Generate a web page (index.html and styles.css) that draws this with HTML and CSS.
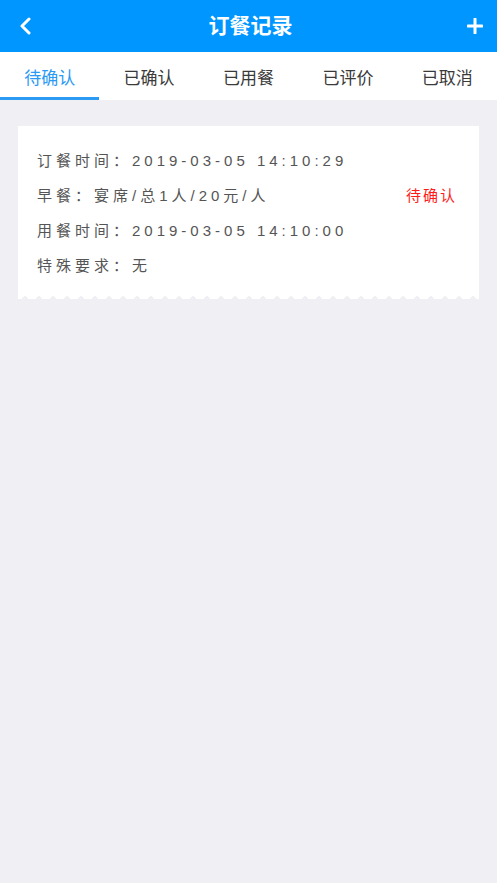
FILE: index.html
```html
<!DOCTYPE html>
<html lang="zh">
<head>
<meta charset="utf-8">
<title>订餐记录</title>
<link rel="stylesheet" href="styles.css">
</head>
<body>
<div class="page">
  <header class="topbar">
    <span class="back">
      <svg width="14" height="18" viewBox="0 0 14 18"><path d="M11 2 L4 9 L11 16" fill="none" stroke="#fff" stroke-width="3" stroke-linecap="round" stroke-linejoin="round"/></svg>
    </span>
    <h1 class="title">订餐记录</h1>
    <span class="add">
      <svg width="16" height="16" viewBox="0 0 16 16"><path d="M8 1 V15 M1 8 H15" stroke="#fff" stroke-width="3" stroke-linecap="round"/></svg>
    </span>
  </header>
  <nav class="tabs">
    <div class="tab active">待确认</div>
    <div class="tab">已确认</div>
    <div class="tab">已用餐</div>
    <div class="tab">已评价</div>
    <div class="tab">已取消</div>
  </nav>
  <main class="content">
    <div class="card">
      <div class="row">订餐时间：2019-03-05 14:10:29</div>
      <div class="row split"><span>早餐：宴席/总1人/20元/人</span><span class="status">待确认</span></div>
      <div class="row">用餐时间：2019-03-05 14:10:00</div>
      <div class="row">特殊要求：无</div>
    </div>
  </main>
</div>
</body>
</html>
```
FILE: styles.css
```css
html, body {
  margin: 0;
  padding: 0;
}
body {
  background: #efeff4;
  font-family: "Liberation Sans", "Noto Sans CJK SC", sans-serif;
  width: 497px;
  min-height: 883px;
}
.topbar {
  height: 52px;
  background: #0096ff;
  display: flex;
  align-items: center;
  justify-content: space-between;
  padding: 0 14px 0 18px;
  box-sizing: border-box;
}
.back, .add {
  display: flex;
  align-items: center;
  width: 20px;
}
.add { justify-content: flex-end; }
.title {
  margin: 0;
  color: #fff;
  font-size: 21px;
  font-weight: bold;
  line-height: 52px;
}
.tabs {
  display: grid;
  grid-template-columns: repeat(5, 1fr);
  background: #fff;
  height: 48px;
}
.tab {
  display: flex;
  align-items: center;
  justify-content: center;
  font-size: 17px;
  color: #3a3a3a;
  border-bottom: 3px solid transparent;
  padding-top: 3px;
  box-sizing: border-box;
}
.tab.active {
  color: #2b9af3;
  border-bottom-color: #2b9af3;
}
.content {
  padding: 26px 18px;
}
.card {
  background: #fff;
  padding: 17px 22px 16px 19px;
  position: relative;
}
.card::after {
  content: "";
  position: absolute;
  left: 0;
  right: 0;
  bottom: 0;
  height: 3px;
  background-image: radial-gradient(circle at 7px 3px, #efeff4 2.5px, transparent 3px);
  background-repeat: repeat-x;
  background-size: 14px 3px;
}
.row {
  height: 35px;
  line-height: 35px;
  font-size: 15px;
  letter-spacing: 4px;
  color: #555;
}
.row.split {
  display: flex;
  justify-content: space-between;
}
.status {
  color: #ff1a1a;
  letter-spacing: 2px;
}
```
